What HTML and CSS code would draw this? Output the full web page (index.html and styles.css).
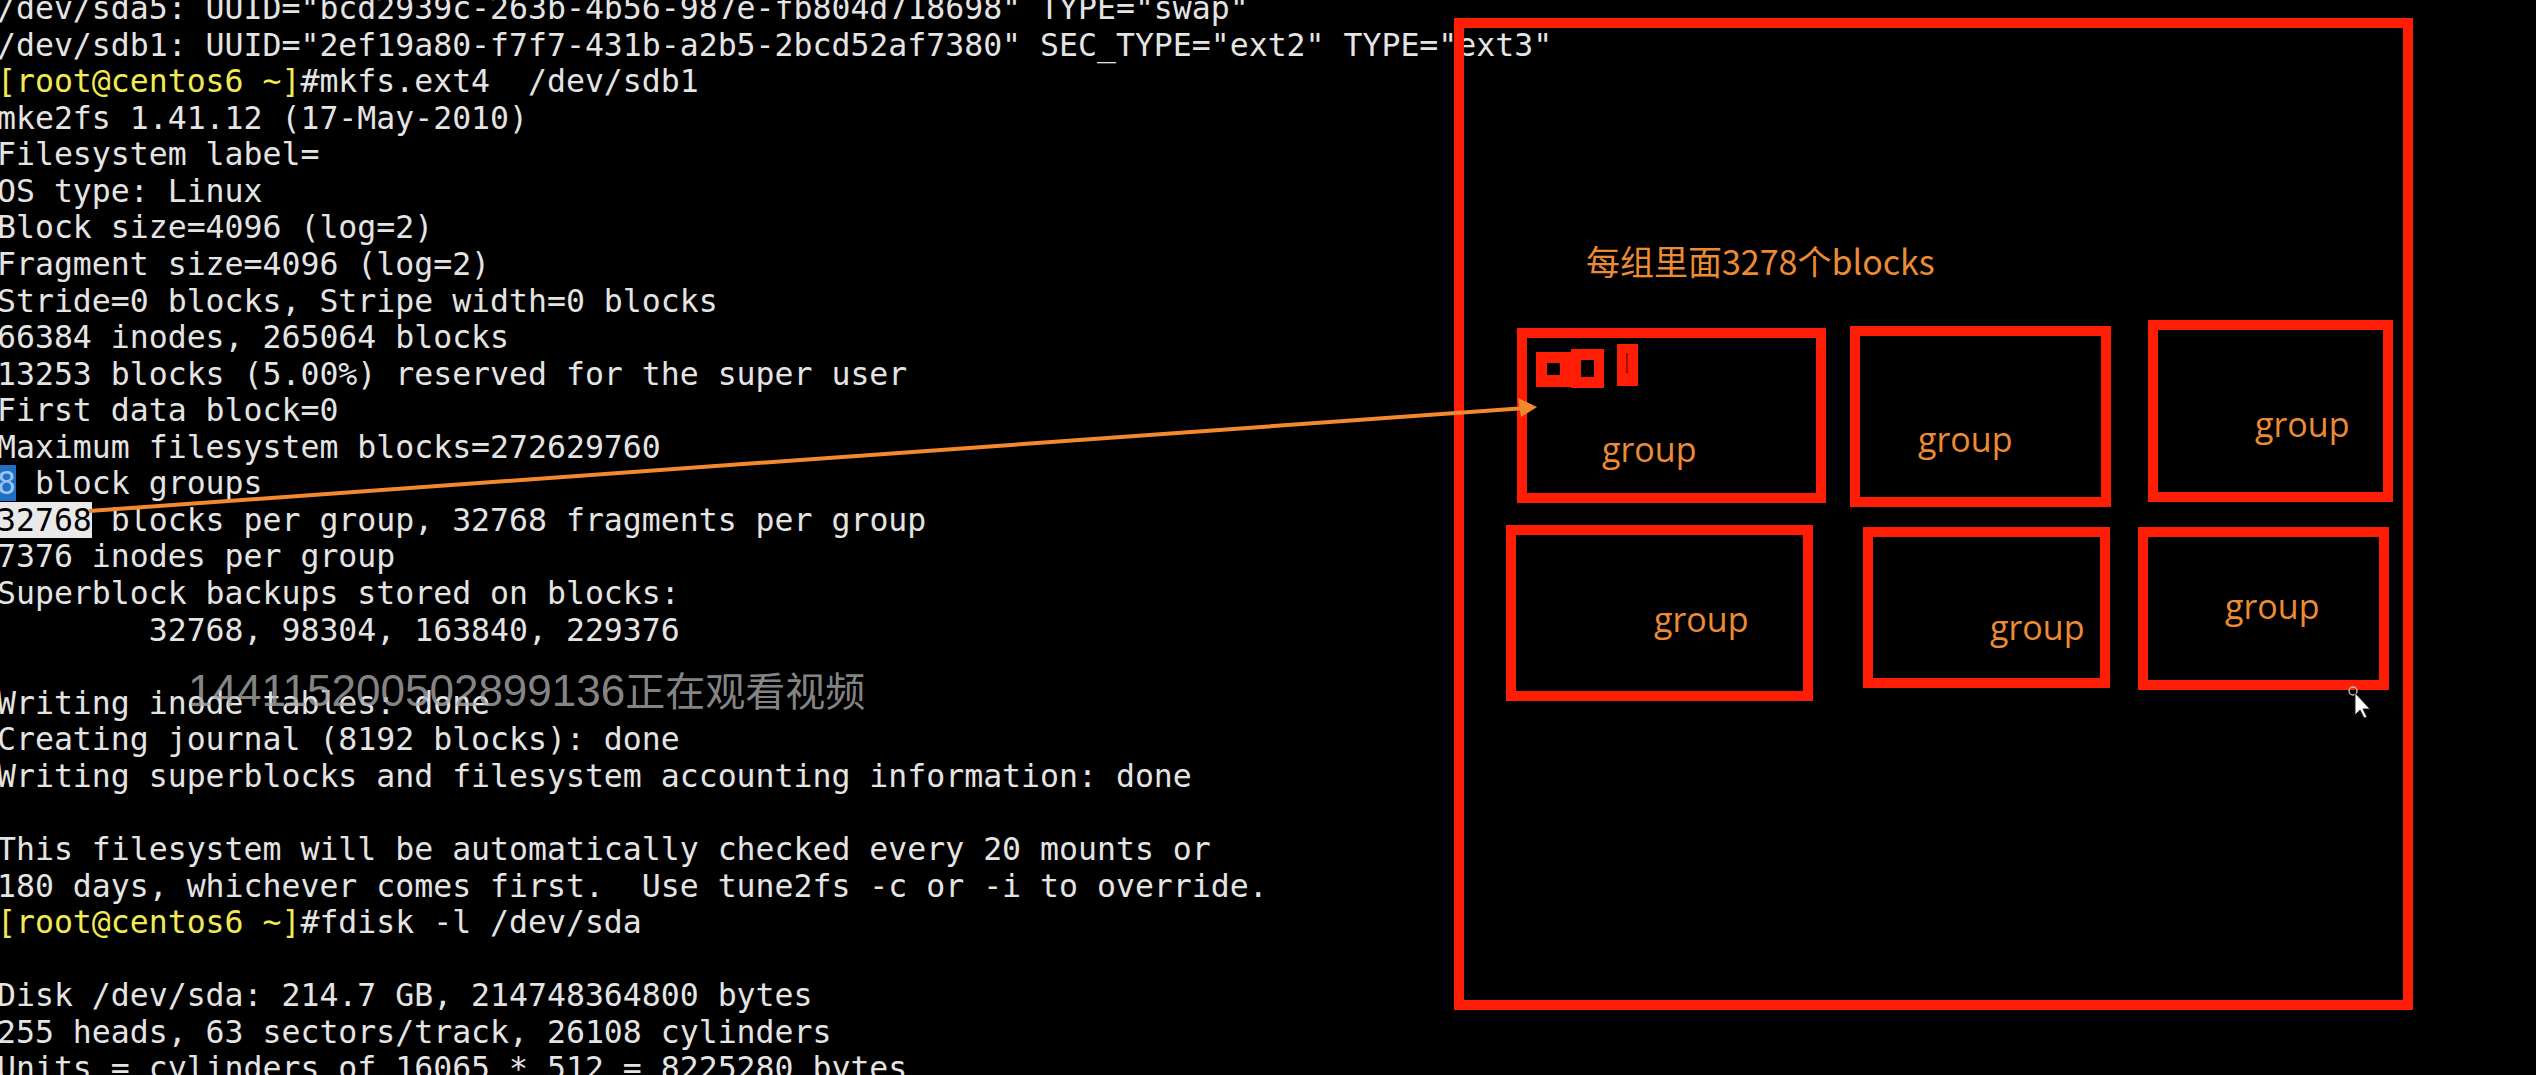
FILE: index.html
```html
<!DOCTYPE html>
<html lang="zh-CN">

<head>
    <meta charset="UTF-8">
    <title>mkfs.ext4 block groups</title>
    <link rel="stylesheet" href="styles.css">
</head>

<body>
    <div class="screen">
        <pre class="term">/dev/sda5: UUID="bcd2939c-263b-4b56-987e-fb804d718698" TYPE="swap"
/dev/sdb1: UUID="2ef19a80-f7f7-431b-a2b5-2bcd52af7380" SEC_TYPE="ext2" TYPE="ext3"
<span class="prompt">[root@centos6 ~]</span>#mkfs.ext4  /dev/sdb1
mke2fs 1.41.12 (17-May-2010)
Filesystem label=
OS type: Linux
Block size=4096 (log=2)
Fragment size=4096 (log=2)
Stride=0 blocks, Stripe width=0 blocks
66384 inodes, 265064 blocks
13253 blocks (5.00%) reserved for the super user
First data block=0
Maximum filesystem blocks=272629760
<span class="sel-blue">8</span> block groups
<span class="sel-white">32768</span> blocks per group, 32768 fragments per group
7376 inodes per group
Superblock backups stored on blocks:
        32768, 98304, 163840, 229376

Writing inode tables: done
Creating journal (8192 blocks): done
Writing superblocks and filesystem accounting information: done

This filesystem will be automatically checked every 20 mounts or
180 days, whichever comes first.  Use tune2fs -c or -i to override.
<span class="prompt">[root@centos6 ~]</span>#fdisk -l /dev/sda

Disk /dev/sda: 214.7 GB, 214748364800 bytes
255 heads, 63 sectors/track, 26108 cylinders
Units = cylinders of 16065 * 512 = 8225280 bytes</pre>

        <!-- hand drawn annotation on top of the terminal -->
        <svg class="diagram" width="2536" height="1075" viewBox="0 0 2536 1075">
            <g class="box">
                <rect x="1459" y="23" width="949" height="982" />
                <rect x="1522" y="333" width="299" height="165" />
                <rect x="1855" y="331" width="251" height="171" />
                <rect x="2153" y="325" width="235" height="172" />
                <rect x="1511" y="530" width="297" height="166" />
                <rect x="1868" y="532" width="237" height="151" />
                <rect x="2143" y="532" width="241" height="153" />
            </g>

            <!-- tiny blocks inside the first group -->
            <g class="blocks">
                <rect x="1536" y="352" width="35" height="35" />
                <rect x="1571" y="349" width="33" height="39" />
                <rect x="1617" y="344" width="21" height="42" />
            </g>
            <rect class="hole" x="1547" y="363" width="13" height="12" />
            <rect class="hole" x="1581" y="360" width="13" height="17" />
            <rect class="slit" x="1626" y="353" width="2" height="20" />

            <text class="note" x="1586" y="275">每组里面3278个blocks</text>

            <g class="label">
                <text x="1602" y="462">group</text>
                <text x="1918" y="452">group</text>
                <text x="2255" y="437">group</text>
                <text x="1654" y="632">group</text>
                <text x="1990" y="640">group</text>
                <text x="2225" y="619">group</text>
            </g>

            <line class="arrow" x1="89" y1="511" x2="1526" y2="408" />
            <path class="arrow-head" d="M1537 407 L1518 398 L1521 417 Z" />

            <!-- mouse pointer -->
            <circle class="cursor-ring" cx="2353" cy="691" r="4" />
            <path class="cursor" d="M2355 693 L2355 715 L2360 710 L2364 718 L2367 717 L2363 709 L2370 709 Z" />
        </svg>

        <div class="watermark"><span class="wm-num">144115200502899136</span><span class="wm-cjk">正在观看视频</span></div>
    </div>
</body>

</html>
```

FILE: styles.css
```css
html,
body {
    margin: 0;
    height: 100%;
    overflow: hidden;
    background: #000;
}

.screen {
    position: relative;
    width: 2536px;
    height: 1075px;
    overflow: hidden;
    background: #000;
}

.term {
    margin: -10px 0 0 -3px;
    font-family: "DejaVu Sans Mono", monospace;
    font-size: 31.5px;
    line-height: 36.56px;
    color: #e4e4e4;
    white-space: pre;
}

.prompt {
    color: #f2ea52;
}

.sel-blue {
    background: #1f6fc4;
    color: #9cc3ee;
}

.sel-white {
    background: #e9e9e9;
    color: #000;
}

.diagram {
    position: absolute;
    top: 0;
    left: 0;
}

.box rect {
    fill: none;
    stroke: #ff1d06;
    stroke-width: 10;
}

.blocks rect {
    fill: #ff1d06;
}

.hole {
    fill: #000;
}

.slit {
    fill: #a01206;
}

.note {
    font-family: "Noto Sans CJK SC", "Noto Sans", sans-serif;
    font-size: 34px;
    fill: #ec8b36;
}

.label text {
    font-family: "Open Sans", "Noto Sans", sans-serif;
    font-size: 34px;
    fill: #ec8b36;
}

.arrow {
    stroke: #f3892e;
    stroke-width: 4;
}

.arrow-head {
    fill: #f3892e;
}

.cursor-ring {
    fill: none;
    stroke: #bbb;
    stroke-width: 1.5;
}

.cursor {
    fill: #fff;
    stroke: #222;
    stroke-width: 1;
}

/* video platform watermark */
.watermark {
    position: absolute;
    left: 188px;
    top: 660px;
    color: rgba(170, 170, 170, 0.8);
    white-space: nowrap;
}

.wm-num {
    font-family: "Liberation Sans", Arial, sans-serif;
    font-size: 44px;
}

.wm-cjk {
    font-family: "Noto Sans CJK SC", sans-serif;
    font-size: 40px;
}
```
